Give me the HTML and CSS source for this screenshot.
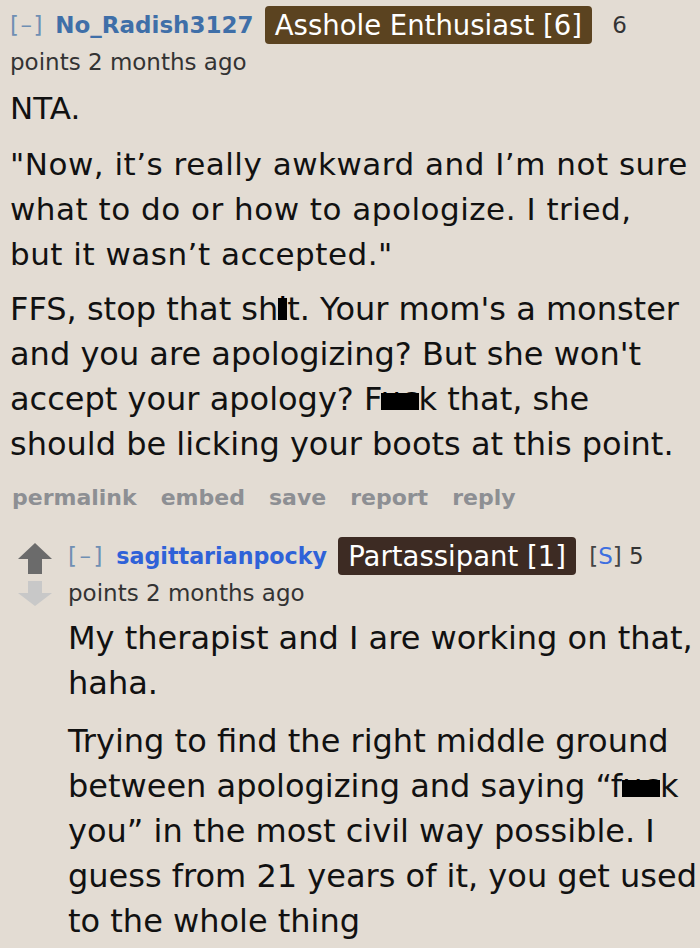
FILE: index.html
```html
<!DOCTYPE html>
<html>
<head>
<meta charset="utf-8">
<link rel="stylesheet" href="styles.css">
</head>
<body>
<div class="page">
  <div class="comment">
    <div class="tagline">
      <span class="collapse">[–]</span>
      <span class="author a1">No_Radish3127</span>
      <span class="flair f1">Asshole Enthusiast [6]</span>
      <span class="score">6</span>
      <span class="score">points 2 months ago</span>
    </div>
    <div class="md">
      <p class="nta">NTA.</p>
      <p class="quote">"Now, it’s really awkward and I’m not sure what to do or how to apologize. I tried, but it wasn’t accepted."</p>
      <p class="cond ffs">FFS, stop that sh<span class="redact tall">i</span>t. Your mom's a monster and you are apologizing? But she won't accept your apology? F<span class="redact">uc</span>k that, she should be licking your boots at this point.</p>
    </div>
    <ul class="buttons">
      <li>permalink</li><li>embed</li><li>save</li><li>report</li><li>reply</li>
    </ul>
  </div>
  <div class="child">
    <div class="arrows">
      <svg class="arrow" width="34" height="31" viewBox="0 0 34 31"><path d="M17 0 L34 16 L24 16 L24 31 L10 31 L10 16 L0 16 Z" fill="#6b6b6b"/></svg>
      <svg class="arrow" width="34" height="25" viewBox="0 0 34 25"><path d="M10 0 L24 0 L24 12 L34 12 L17 25 L0 12 L10 12 Z" fill="#c8c8c8"/></svg>
    </div>
    <div class="entry">
      <div class="tagline">
        <span class="collapse c2">[–]</span>
        <span class="author a2">sagittarianpocky</span>
        <span class="flair f2">Partassipant [1]</span>
        <span class="submitter">[<span class="s">S</span>]</span>
        <span class="score">5</span>
        <span class="score">points 2 months ago</span>
      </div>
      <div class="md md2">
        <p class="cond">My therapist and I are working on that, haha.</p>
        <p class="cond">Trying to find the right middle ground between apologizing and saying “f<span class="redact">uc</span>k you” in the most civil way possible. I guess from 21 years of it, you get used to the whole thing</p>
      </div>
    </div>
  </div>
</div>
</body>
</html>
```
FILE: styles.css
```css
html, body {
  margin: 0;
  padding: 0;
  background: #e3dcd3;
}
body {
  width: 700px;
  height: 948px;
  overflow: hidden;
  font-family: "DejaVu Sans", Verdana, sans-serif;
  color: #111;
}
.page {
  padding: 7px 0 0 10px;
}
.tagline {
  font-size: 23px;
  line-height: 36px;
  color: #333;
}
.collapse {
  color: #6f8fb3;
  letter-spacing: 1.5px;
  margin-right: 4px;
}
.c2 { letter-spacing: 2.5px; }
.author {
  font-weight: bold;
  font-size: 23px;
}
.a1 { color: #3f6fa8; }
.a2 { color: #2f62d8; font-size: 22.2px; }
.flair {
  display: inline-block;
  color: #fff;
  font-size: 27.5px;
  line-height: 38px;
  padding: 0 10px;
  border-radius: 4px;
  margin-left: 4px;
  vertical-align: top;
  margin-top: -1px;
}
.f1 { background: #5b4320; margin-right: 13px; }
.f2 { background: #3d2b23; margin-right: 6px; }
.submitter { color: #444; }
.submitter .s { color: #3d6fe0; }
.score { color: #333; }
.md p {
  margin: 0;
}
.nta {
  font-size: 31px;
  line-height: 45px;
  margin-top: 6px !important;
}
.quote {
  font-size: 31px;
  letter-spacing: 0.5px;
  line-height: 45px;
  max-width: 680px;
  margin-top: 11px !important;
}
.cond {
  font-size: 32px;
  line-height: 45px;
}
.ffs { margin-top: 10px !important; }
.md2 .cond + .cond { margin-top: 13px; }
.redact {
  color: #000;
  background: linear-gradient(transparent 34%, #000 34%, #000 80%, transparent 80%);
  border-radius: 5px;
}
.redact.tall {
  background: linear-gradient(transparent 22%, #000 22%, #000 80%, transparent 80%);
  border-radius: 2px;
}
.buttons {
  list-style: none;
  margin: 16px 0 0 2px;
  padding: 0;
  display: flex;
  gap: 24px;
  font-size: 22px;
  font-weight: bold;
  color: #8d8f93;
  line-height: 30px;
}
.child {
  display: flex;
  margin-top: 25px;
  gap: 16px;
  padding-left: 8px;
}
.arrows {
  display: flex;
  flex-direction: column;
  gap: 7px;
  padding-top: 5px;
}
.arrow { display: block; }
.entry { flex: 1; }
.md2 { margin-top: 5px; }
```
